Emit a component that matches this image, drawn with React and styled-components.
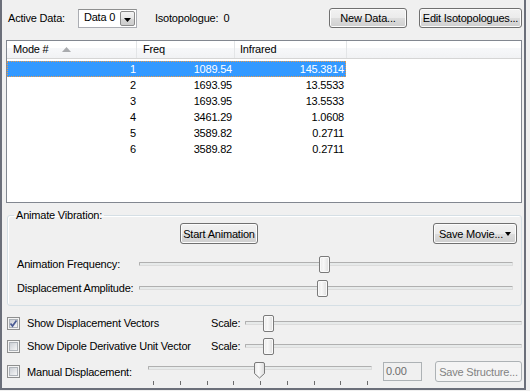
import React from 'react';
import styled, { createGlobalStyle } from 'styled-components';

const GlobalStyle = createGlobalStyle`
  html, body { margin: 0; padding: 0; background: #f0f0f0; }
  body {
    font-family: "Liberation Sans", Arial, sans-serif;
    font-size: 11px;
    letter-spacing: -0.2px;
    color: #000;
  }
  * { box-sizing: border-box; }
`

const Window = styled.div`
  width: 526px;
  height: 390px;
  border-left: 2px solid #6b6f7a;
  border-right: 2px solid #6b6f7a;
  border-bottom: 2px solid #6b6f7a;
  padding: 0 2px 0 4px;
  display: flex;
  flex-direction: column;
  background: #f0f0f0;
`

const TopBar = styled.div`
  height: 36px;
  display: flex;
  align-items: center;
`

const Label = styled.span`
  margin-left: ${p => p.$ml || 0}px;
  white-space: nowrap;
  color: ${p => (p.$disabled ? '#6d6d6d' : '#000')};
`

const Spacer = styled.div`
  flex: 1;
`

const Combo = styled.div`
  margin-left: 13px;
  width: 59px;
  height: 19px;
  border: 1px solid #abadb3;
  border-top-color: #8e8f8f;
  background: #fff;
  display: flex;
  align-items: center;
  padding: 1px;
`

const ComboText = styled.span`
  flex: 1;
  padding-left: 4px;
  margin-top: -2px;
`

const ComboButton = styled.div`
  width: 15px;
  height: 15px;
  border: 1px solid #8a8a8a;
  border-radius: 2px;
  background: linear-gradient(#f4f4f4, #e6e6e6 50%, #d6d6d6 51%, #cdcdcd);
  display: flex;
  align-items: center;
  justify-content: center;
  padding-top: 3px;
`

const Button = styled.div`
  width: ${p => p.$w}px;
  height: ${p => p.$h || 20}px;
  margin-left: ${p => p.$ml || 0}px;
  margin-right: ${p => p.$mr || 0}px;
  border: 1px solid ${p => (p.$disabled ? '#adb2b5' : '#707070')};
  border-radius: 3px;
  background: ${p =>
    p.$disabled
      ? '#f4f4f4'
      : 'linear-gradient(#f2f2f2 0%, #ebebeb 50%, #dddddd 51%, #cfcfcf 100%)'};
  box-shadow: ${p => (p.$disabled ? 'none' : 'inset 0 0 0 1px #fcfcfc')};
  color: ${p => (p.$disabled ? '#838383' : '#000')};
  display: flex;
  align-items: center;
  justify-content: center;
  gap: 2px;
  white-space: nowrap;
`

const ListView = styled.div`
  margin-top: 4px;
  height: 163px;
  border: 1px solid #828790;
  background: #fff;
`

const Header = styled.div`
  display: flex;
  height: 18px;
  border-bottom: 1px solid #d5d5d5;
  background: linear-gradient(#ffffff 0%, #ffffff 40%, #f7f8fa 41%, #f1f2f4 100%);
`

const HeaderCell = styled.div`
  width: ${p => (p.$w ? `${p.$w}px` : 'auto')};
  flex: ${p => (p.$w ? 'none' : 1)};
  border-right: ${p => (p.$w ? '1px solid #e3e5e7' : 'none')};
  padding-left: ${p => p.$pl || 5}px;
  line-height: 17px;
  display: flex;
  align-items: center;
`

const SortArrow = styled.svg`
  margin-left: 13px;
  margin-top: -1px;
`

const Rows = styled.div`
  margin-top: 2px;
`

const Row = styled.div`
  display: flex;
  width: 339px;
  height: 16px;
  background: ${p => (p.$selected ? '#3399ff' : 'transparent')};
  color: ${p => (p.$selected ? '#fff' : '#000')};
  border: 1px dotted ${p => (p.$selected ? '#e89a4a' : 'transparent')};
`

const Cell = styled.div`
  width: ${p => p.$w}px;
  text-align: right;
  padding-right: ${p => p.$pr}px;
  line-height: 14px;
`

const GroupBox = styled.fieldset`
  margin: 6px 0 0 1px;
  padding: 0 0 5px 0;
  border: 1px solid #d5dfe5;
  border-radius: 3px;
  box-shadow: inset 1px 1px 0 #fff;
  min-width: 0;
`

const Legend = styled.legend`
  margin-left: 6px;
  padding: 0 2px;
  line-height: 12px;
`

const ButtonRow = styled.div`
  margin-top: 2px;
  height: 21px;
  display: flex;
  justify-content: space-between;
  padding: 0 4px 0 172px;
`

const SliderRow = styled.div`
  height: 24px;
  margin-top: ${p => p.$mt || 0}px;
  display: flex;
  align-items: center;
  padding: 0 8px 0 9px;
`

const SliderLabel = styled.span`
  width: ${p => p.$w}px;
  flex: none;
  white-space: nowrap;
`

const Slider = styled.div`
  position: relative;
  flex: 1;
  height: 17px;
  margin-left: ${p => p.$ml || 0}px;
`

const Track = styled.div`
  position: absolute;
  left: 0;
  right: 0;
  top: ${p => p.$top || 6}px;
  height: 4px;
  border: 1px solid #b0b0b0;
  border-bottom-color: #dcdcdc;
  border-right-color: #dcdcdc;
  background: #e7eaea;
  border-radius: 1px;
`

const Thumb = styled.div`
  position: absolute;
  top: 0;
  left: ${p => p.$left}px;
  width: 11px;
  height: 17px;
  border: 1px solid #7a7a7a;
  border-radius: 2px;
  background: linear-gradient(90deg, #e9e9e9, #f8f8f8 40%, #dedede);
  box-shadow: inset 0 0 0 1px #fafafa;
`

const CheckRow = styled.div`
  height: ${p => p.$h}px;
  margin-top: ${p => p.$mt || 0}px;
  display: flex;
  align-items: center;
`

const CheckGroup = styled.div`
  width: ${p => p.$w}px;
  flex: none;
  display: flex;
  align-items: center;
  padding-left: 1px;
`

const Box = styled.div`
  width: 13px;
  height: 13px;
  border: 1px solid #8e8f8f;
  background: #f4f4f4;
  padding: 1px;
  margin-right: 7px;
  flex: none;
`

const BoxInner = styled.div`
  width: 100%;
  height: 100%;
  border: 1px solid #aeb3b9;
  background: linear-gradient(135deg, #cbcfd5, #f6f6f6);
  position: relative;
`

const CheckMark = styled.svg`
  position: absolute;
  left: -2px;
  top: -2px;
`

const ManualSlider = styled.div`
  position: relative;
  width: 224px;
  height: 26px;
  flex: none;
`

const Tick = styled.div`
  position: absolute;
  top: 22px;
  width: 1px;
  height: 4px;
  background: #6d6d6d;
`

const PointThumb = styled.svg`
  position: absolute;
  top: 3px;
  left: ${p => p.$left}px;
`

const TextBox = styled.div`
  margin-left: 11px;
  width: 39px;
  height: 19px;
  border: 1px solid #adb2b5;
  background: #f0f0f0;
  color: #6d6d6d;
  padding-left: 2px;
  line-height: 17px;
`

const DownArrow = ({ w = 7, h = 4 }) => (
  <svg width={w} height={h} viewBox={`0 0 ${w} ${h}`}>
    <path d={`M0 0 H${w} L${w / 2} ${h} Z`} fill="#000" />
  </svg>
)

const CheckBox = ({ checked }) => (
  <Box>
    <BoxInner>
      {checked && (
        <CheckMark width="11" height="11" viewBox="0 0 11 11">
          <path d="M2.5 5.5 L4.5 8 L8.5 2.5" fill="none" stroke="#4a5b94" strokeWidth="1.7" />
        </CheckMark>
      )}
    </BoxInner>
  </Box>
)

const modes = [
  ['1', '1089.54', '145.3814'],
  ['2', '1693.95', '13.5533'],
  ['3', '1693.95', '13.5533'],
  ['4', '3461.29', '1.0608'],
  ['5', '3589.82', '0.2711'],
  ['6', '3589.82', '0.2711'],
]

const ticks = Array.from({ length: 9 }, (_, i) => 5 + i * 26.75)

export default function App() {
  return (
    <>
      <GlobalStyle />
      <Window>
        <TopBar>
          <Label $ml={2}>Active Data:</Label>
          <Combo>
            <ComboText>Data 0</ComboText>
            <ComboButton>
              <DownArrow w={7} h={4} />
            </ComboButton>
          </Combo>
          <Label $ml={18}>Isotopologue:</Label>
          <Label $ml={5}>0</Label>
          <Spacer />
          <Button $w={78} $mr={12}>New Data...</Button>
          <Button $w={103}>Edit Isotopologues...</Button>
        </TopBar>

        <ListView>
          <Header>
            <HeaderCell $w={130} $pl={6}>
              Mode #
              <SortArrow width="9" height="5" viewBox="0 0 9 5">
                <path d="M0 5 L4.5 0 L9 5 Z" fill="#a9abae" />
              </SortArrow>
            </HeaderCell>
            <HeaderCell $w={98} $pl={6}>Freq</HeaderCell>
            <HeaderCell $w={112} $pl={5}>Infrared</HeaderCell>
            <HeaderCell />
          </Header>
          <Rows>
            {modes.map((m, i) => (
              <Row key={m[0]} $selected={i === 0}>
                <Cell $w={129} $pr={1}>{m[0]}</Cell>
                <Cell $w={98} $pr={3}>{m[1]}</Cell>
                <Cell $w={110} $pr={1}>{m[2]}</Cell>
              </Row>
            ))}
          </Rows>
        </ListView>

        <GroupBox>
          <Legend>Animate Vibration:</Legend>
          <ButtonRow>
            <Button $w={78} $h={21}>Start Animation</Button>
            <Button $w={84} $h={21}>
              Save Movie...
              <DownArrow w={6} h={4} />
            </Button>
          </ButtonRow>
          <SliderRow $mt={8}>
            <SliderLabel $w={122}>Animation Frequency:</SliderLabel>
            <Slider>
              <Track />
              <Thumb $left={180} />
            </Slider>
          </SliderRow>
          <SliderRow>
            <SliderLabel $w={122}>Displacement Amplitude:</SliderLabel>
            <Slider>
              <Track />
              <Thumb $left={178} />
            </Slider>
          </SliderRow>
        </GroupBox>

        <CheckRow $h={24} $mt={5}>
          <CheckGroup $w={205}>
            <CheckBox checked />
            <span>Show Displacement Vectors</span>
          </CheckGroup>
          <span>Scale:</span>
          <Slider $ml={5}>
            <Track $top={6} />
            <Thumb $left={18} />
          </Slider>
        </CheckRow>
        <CheckRow $h={22}>
          <CheckGroup $w={205}>
            <CheckBox />
            <span>Show Dipole Derivative Unit Vector</span>
          </CheckGroup>
          <span>Scale:</span>
          <Slider $ml={5}>
            <Track $top={6} />
            <Thumb $left={18} />
          </Slider>
        </CheckRow>
        <CheckRow $h={29}>
          <CheckGroup $w={142}>
            <CheckBox />
            <span>Manual Displacement:</span>
          </CheckGroup>
          <ManualSlider>
            <Track $top={7} />
            {ticks.map(x => (
              <Tick key={x} style={{ left: Math.round(x) }} />
            ))}
            <PointThumb $left={106} width="11" height="17" viewBox="0 0 11 17">
              <defs>
                <linearGradient id="pt" x1="0" x2="1" y1="0" y2="0">
                  <stop offset="0" stopColor="#e9e9e9" />
                  <stop offset="0.4" stopColor="#fafafa" />
                  <stop offset="1" stopColor="#dcdcdc" />
                </linearGradient>
              </defs>
              <path
                d="M0.5 2 Q0.5 0.5 2 0.5 H9 Q10.5 0.5 10.5 2 V11.5 L5.5 16 L0.5 11.5 Z"
                fill="url(#pt)"
                stroke="#7a7a7a"
              />
            </PointThumb>
          </ManualSlider>
          <TextBox>0.00</TextBox>
          <Button $w={87} $h={21} $ml={13} $disabled>Save Structure...</Button>
        </CheckRow>
      </Window>
    </>
  )
}
